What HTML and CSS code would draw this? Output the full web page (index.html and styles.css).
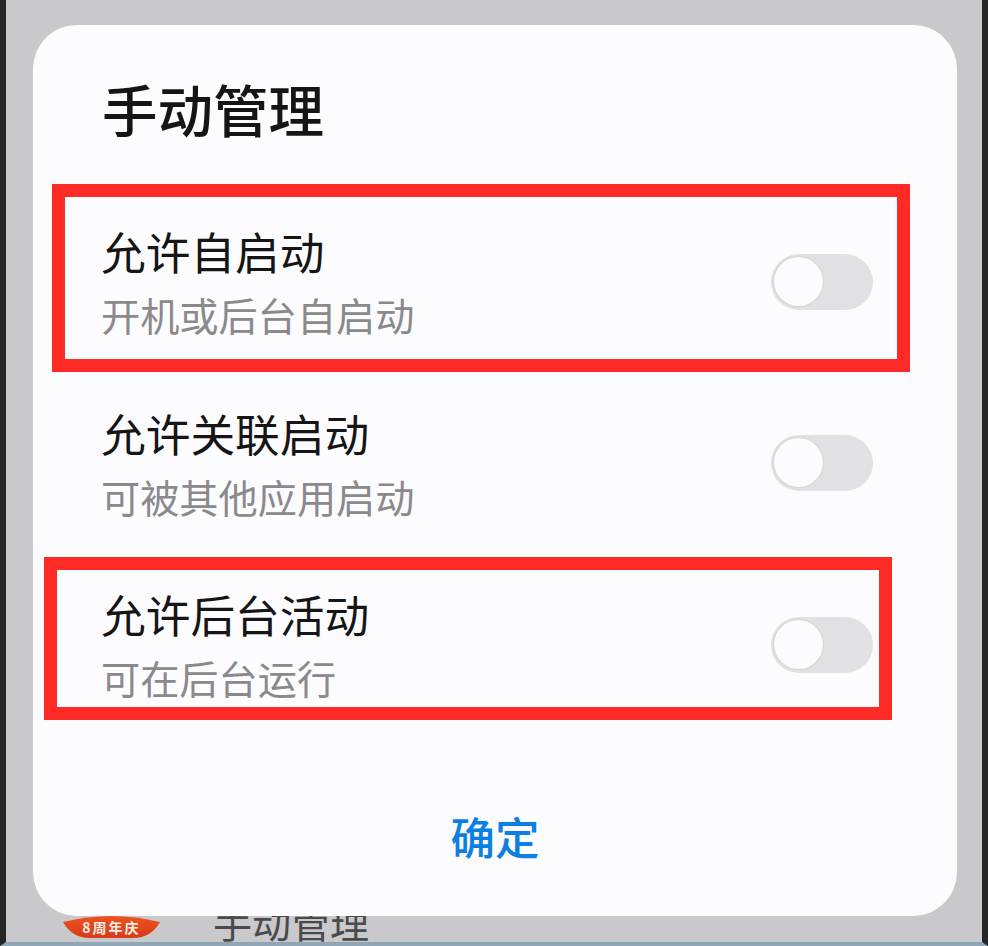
FILE: index.html
```html
<!DOCTYPE html>
<html lang="zh-CN">
<head>
<meta charset="utf-8">
<title>手动管理</title>
<link rel="stylesheet" href="styles.css">
</head>
<body>
<div class="frame">
  <div class="under">
    <span class="badge"><span class="badge-text">8周年庆</span></span>
    <span class="under-title">手动管理</span>
  </div>
  <div class="dialog">
    <h1 class="title">手动管理</h1>
    <div class="row">
      <div class="labels">
        <div class="name">允许自启动</div>
        <div class="desc">开机或后台自启动</div>
      </div>
      <span class="toggle"><span class="knob"></span></span>
    </div>
    <div class="row">
      <div class="labels">
        <div class="name">允许关联启动</div>
        <div class="desc">可被其他应用启动</div>
      </div>
      <span class="toggle"><span class="knob"></span></span>
    </div>
    <div class="row">
      <div class="labels">
        <div class="name">允许后台活动</div>
        <div class="desc">可在后台运行</div>
      </div>
      <span class="toggle"><span class="knob"></span></span>
    </div>
    <div class="actions"><span class="confirm">确定</span></div>
    <div class="mark mark-one"></div>
    <div class="mark mark-two"></div>
  </div>
</div>
</body>
</html>
```

FILE: styles.css
```css
* { box-sizing: border-box; }
html, body { margin: 0; padding: 0; }
body {
  width: 988px;
  height: 946px;
  overflow: hidden;
  font-family: "Noto Sans CJK SC", "Noto Sans", sans-serif;
}
.frame {
  display: grid;
  width: 988px;
  height: 946px;
  background: #c9c8ca;
  border-left: 6px solid #262626;
  border-right: 6px solid #262626;
  border-bottom: 4px solid #8ea6b6;
  overflow: hidden;
}
.under, .dialog { grid-area: 1 / 1; }
.under {
  display: flex;
  align-items: flex-end;
  padding: 0 0 4px 57px;
}
.badge {
  display: flex;
  align-items: center;
  justify-content: center;
  width: 97px;
  height: 22px;
  padding-bottom: 1px;
  background: linear-gradient(#f0531f, #d8391a);
  clip-path: path("M0 6 Q48 -6 97 6 Q88 22 70 22 L27 22 Q9 22 0 6 Z");
}
.badge-text {
  font-size: 14px;
  line-height: 1;
  font-weight: 700;
  color: #fdeee6;
  letter-spacing: 2px;
}
.under-title {
  margin-left: 53px;
  font-size: 39px;
  line-height: 46px;
  color: #4a4a4a;
  margin-bottom: -6px;
}
.dialog {
  position: relative;
  align-self: start;
  margin: 25px 25px 0 27px;
  height: 891px;
  background: #fcfbfd;
  border-radius: 44px;
  padding-left: 70px;
  padding-right: 84px;
}
.title {
  margin: 0 0 0 -1px;
  height: 166px;
  padding-top: 50px;
  font-size: 55.5px;
  line-height: 66px;
  font-weight: 500;
  color: #151515;
}
.row {
  display: flex;
  align-items: center;
  justify-content: space-between;
  height: 181.5px;
}
.labels { padding-top: 2px; margin-left: -2px; }
.name {
  font-size: 44.7px;
  line-height: 62px;
  color: #151515;
}
.desc {
  font-size: 39.2px;
  line-height: 62px;
  padding-top: 1px;
  color: #8a8a8c;
}
.toggle {
  display: block;
  width: 102px;
  height: 56px;
  background: #e1e0e3;
  border-radius: 28px;
  padding: 3px;
}
.knob {
  display: block;
  width: 49px;
  height: 49px;
  background: #fcfbfd;
  border-radius: 50%;
  box-shadow: 0 0 2px #bcbbbd;
}
.actions {
  display: flex;
  justify-content: center;
  margin-right: -14px;
  padding-top: 71px;
}
.confirm {
  font-size: 44.5px;
  line-height: 58px;
  font-weight: 500;
  color: #0c7fe3;
}
.mark {
  position: absolute;
  border: 13px solid #fd2a26;
}
.mark-one { left: 19px; top: 159px; width: 858px; height: 188px; }
.mark-two { left: 11px; top: 532px; width: 848px; height: 163px; }
```
